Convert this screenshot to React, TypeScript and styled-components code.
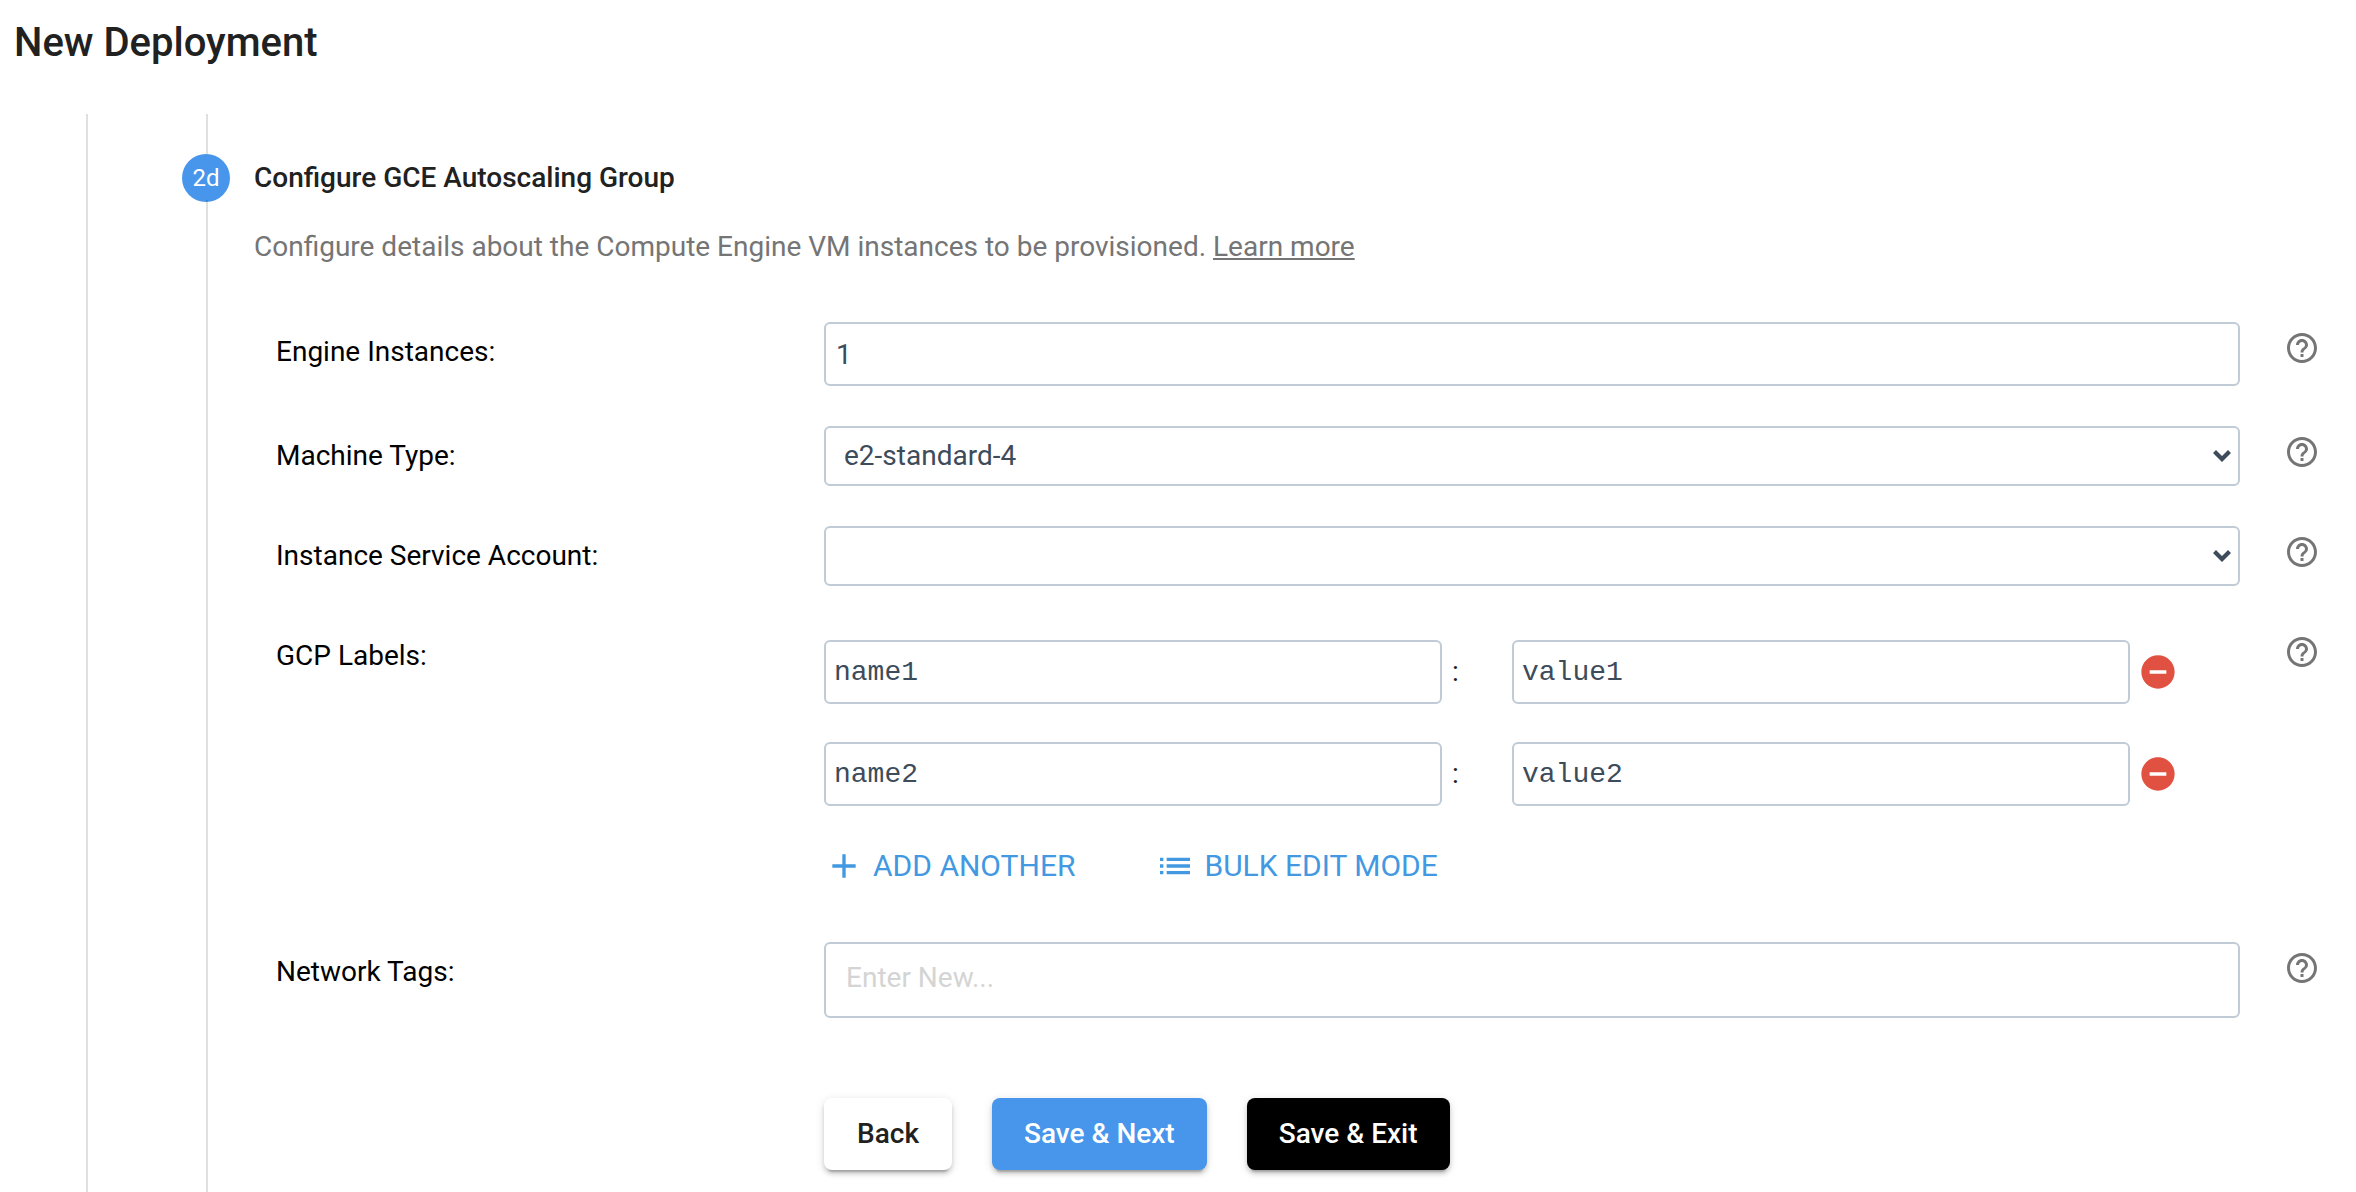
import React, { useState } from "react";
import styled, { createGlobalStyle } from "styled-components";
import { MdAdd, MdHelpOutline, MdList, MdRemoveCircle } from "react-icons/md";

const color = {
  text: "#212121",
  label: "#000000",
  muted: "#757575",
  field: "#3d4b5a",
  border: "#c0cbd6",
  placeholder: "#d4d4d4",
  line: "rgba(0, 0, 0, 0.12)",
  primary: "#4796eb",
  link: "#4299e1",
  danger: "#e05141",
};

const sans = `Roboto, "Liberation Sans", sans-serif`;
const mono = `"Courier New", "Liberation Mono", monospace`;

const GlobalStyle = createGlobalStyle`
  *, *::before, *::after { box-sizing: border-box; }
  body {
    margin: 0;
    background: #fff;
    color: ${color.text};
    font: 400 28px/32px ${sans};
  }
  button, input, select { font: inherit; }
`;

const Page = styled.main`
  display: flex;
  flex-direction: column;
  min-height: 100vh;
`;

const Title = styled.h1`
  margin: 0;
  padding: 19px 14px 47px;
  font-size: 40px;
  line-height: 48px;
  font-weight: 500;
`;

const OuterStep = styled.div`
  flex: 1;
  display: flex;
  flex-direction: column;
  margin-left: 86px;
  padding-left: 94px;
  border-left: 2px solid ${color.line};
`;

const Connector = styled.div`
  width: 2px;
  height: 40px;
  margin-left: 24px;
  background: ${color.line};
`;

const StepHeader = styled.header`
  display: flex;
  align-items: center;
  gap: 24px;
`;

const StepBadge = styled.span`
  display: grid;
  place-items: center;
  width: 48px;
  height: 48px;
  border-radius: 50%;
  background: ${color.primary};
  color: #fff;
  font-size: 24px;
`;

const StepTitle = styled.h2`
  margin: 0;
  font-size: 28px;
  line-height: 32px;
  font-weight: 500;
`;

const StepBody = styled.section`
  position: relative;
  flex: 1;
  margin: -2px 0 0 24px;
  padding: 31px 36px 20px 46px;
  border-left: 2px solid ${color.line};
`;

const Description = styled.p`
  margin: 0 0 59px;
  color: ${color.muted};
`;

const LearnMore = styled.a`
  color: inherit;
  text-decoration: underline;
`;

const Form = styled.form`
  display: flex;
  flex-direction: column;
  gap: 40px;
`;

const Row = styled.div`
  display: grid;
  grid-template-columns: 570px minmax(0, 1fr) 36px;
  align-items: start;
`;

const labelText = `
  padding: 14px 0 0 22px;
  color: ${color.label};
`;

const Label = styled.label`
  ${labelText}
`;

const GroupLabel = styled.span`
  ${labelText}
`;

const HelpButton = styled.button`
  display: flex;
  margin: 8px 0 0;
  padding: 0;
  border: 0;
  background: none;
  color: ${color.muted};
  font-size: 36px;
  cursor: pointer;
`;

const Control = styled.div`
  padding-right: 44px;
`;

const TextInput = styled.input<{ $mono?: boolean; $tall?: boolean }>`
  display: block;
  width: 100%;
  height: ${(p) => (p.$tall ? 76 : 64)}px;
  padding: ${(p) => (p.$tall ? "0 20px 6px" : p.$mono ? "0 8px" : "0 10px")};
  border: 2px solid ${color.border};
  border-radius: 6px;
  background: #fff;
  color: ${color.field};
  font-family: ${(p) => (p.$mono ? mono : sans)};
  &::placeholder {
    color: ${color.placeholder};
    opacity: 1;
  }
`;

const SelectBox = styled.div`
  position: relative;
`;

const Select = styled.select`
  display: block;
  width: 100%;
  height: 60px;
  padding: 0 48px 0 18px;
  border: 2px solid ${color.border};
  border-radius: 6px;
  background: #fff;
  color: ${color.field};
  appearance: none;
`;

const Chevron = styled.svg`
  position: absolute;
  top: 24px;
  right: 9px;
  width: 18px;
  height: 12px;
  fill: ${color.field};
  pointer-events: none;
`;

const Pairs = styled.div`
  display: flex;
  flex-direction: column;
  gap: 38px;
  padding-top: 14px;
`;

const Pair = styled.div`
  display: grid;
  grid-template-columns: minmax(0, 1fr) 70px minmax(0, 1fr) 110px;
  align-items: center;
`;

const Colon = styled.span`
  padding-left: 10px;
`;

const RemoveButton = styled.button`
  display: flex;
  justify-self: start;
  margin: 0 0 0 8px;
  padding: 0;
  border: 0;
  background: none;
  color: ${color.danger};
  font-size: 40px;
  cursor: pointer;
`;

const PairActions = styled.div`
  display: flex;
  gap: 80px;
  padding: 44px 0 20px;
`;

const LinkButton = styled.button`
  display: flex;
  align-items: center;
  gap: 9px;
  height: 32px;
  padding: 0;
  border: 0;
  background: none;
  color: ${color.link};
  font-size: 30px;
  cursor: pointer;
  svg {
    width: 40px;
    height: 40px;
  }
`;

const Footer = styled.div`
  display: flex;
  gap: 40px;
  margin-top: 40px;
  padding-left: 570px;
`;

const Button = styled.button<{ $tone?: "primary" | "dark" }>`
  min-width: 128px;
  height: 72px;
  padding: 0 32px;
  border: 0;
  border-radius: 8px;
  background: ${(p) =>
    p.$tone === "primary" ? color.primary : p.$tone === "dark" ? "#000" : "#fff"};
  color: ${(p) => (p.$tone ? "#fff" : color.text)};
  font-weight: 500;
  box-shadow:
    0 6px 2px -4px rgba(0, 0, 0, 0.2),
    0 4px 4px rgba(0, 0, 0, 0.14),
    0 2px 10px rgba(0, 0, 0, 0.12);
  cursor: pointer;
`;

function Help({ topic }: { topic: string }) {
  return (
    <HelpButton type="button" aria-label={`Help: ${topic}`}>
      <MdHelpOutline />
    </HelpButton>
  );
}

function Field({ id, label, children }: { id: string; label: string; children: React.ReactNode }) {
  return (
    <Row>
      <Label htmlFor={id}>{label}:</Label>
      <Control>{children}</Control>
      <Help topic={label} />
    </Row>
  );
}

function Dropdown({ id, options }: { id: string; options: string[] }) {
  return (
    <SelectBox>
      <Select id={id} defaultValue={options[0]}>
        {options.map((o) => (
          <option key={o}>{o}</option>
        ))}
      </Select>
      <Chevron viewBox="0 0 18 12" aria-hidden="true">
        <path d="M0 3 3 0l6 6 6-6 3 3-9 9z" />
      </Chevron>
    </SelectBox>
  );
}

type LabelPair = { id: number; name: string; value: string };

export default function App() {
  const [pairs, setPairs] = useState<LabelPair[]>([
    { id: 1, name: "name1", value: "value1" },
    { id: 2, name: "name2", value: "value2" },
  ]);

  const add = () =>
    setPairs((list) => [
      ...list,
      { id: Math.max(0, ...list.map((p) => p.id)) + 1, name: "", value: "" },
    ]);
  const remove = (id: number) => setPairs((list) => list.filter((p) => p.id !== id));

  return (
    <>
      <GlobalStyle />
      <Page>
        <Title>New Deployment</Title>
        <OuterStep>
          <Connector />
          <StepHeader>
            <StepBadge>2d</StepBadge>
            <StepTitle>Configure GCE Autoscaling Group</StepTitle>
          </StepHeader>
          <StepBody>
            <Description>
              Configure details about the Compute Engine VM instances to be provisioned.{" "}
              <LearnMore href="#learn-more">Learn more</LearnMore>
            </Description>
            <Form onSubmit={(e) => e.preventDefault()}>
              <Field id="engine-instances" label="Engine Instances">
                <TextInput id="engine-instances" defaultValue="1" />
              </Field>
              <Field id="machine-type" label="Machine Type">
                <Dropdown id="machine-type" options={["e2-standard-4"]} />
              </Field>
              <Field id="service-account" label="Instance Service Account">
                <Dropdown id="service-account" options={[""]} />
              </Field>
              <Row role="group" aria-labelledby="gcp-labels">
                <GroupLabel id="gcp-labels">GCP Labels:</GroupLabel>
                <Control>
                  <Pairs>
                    {pairs.map((p) => (
                      <Pair key={p.id}>
                        <TextInput $mono aria-label="Label name" defaultValue={p.name} />
                        <Colon>:</Colon>
                        <TextInput $mono aria-label="Label value" defaultValue={p.value} />
                        <RemoveButton
                          type="button"
                          aria-label="Remove label"
                          onClick={() => remove(p.id)}
                        >
                          <MdRemoveCircle />
                        </RemoveButton>
                      </Pair>
                    ))}
                  </Pairs>
                  <PairActions>
                    <LinkButton type="button" onClick={add}>
                      <MdAdd />
                      ADD ANOTHER
                    </LinkButton>
                    <LinkButton type="button">
                      <MdList />
                      BULK EDIT MODE
                    </LinkButton>
                  </PairActions>
                </Control>
                <Help topic="GCP Labels" />
              </Row>
              <Field id="network-tags" label="Network Tags">
                <TextInput id="network-tags" $tall placeholder="Enter New..." />
              </Field>
              <Footer>
                <Button type="button">Back</Button>
                <Button type="submit" $tone="primary">
                  Save &amp; Next
                </Button>
                <Button type="submit" $tone="dark">
                  Save &amp; Exit
                </Button>
              </Footer>
            </Form>
          </StepBody>
        </OuterStep>
      </Page>
    </>
  );
}
